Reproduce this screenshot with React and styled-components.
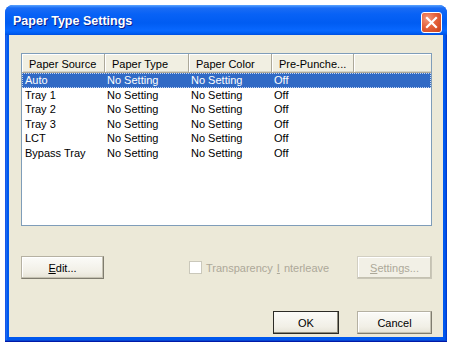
import React from 'react';
import styled, { createGlobalStyle } from 'styled-components';

const Global = createGlobalStyle`
  html, body {
    margin: 0;
    padding: 0;
    background: #fff;
  }
  body {
    font-family: "Liberation Sans", Arial, sans-serif;
    font-size: 11px;
  }
`;

const columns = [
  { title: 'Paper Source', width: 83 },
  { title: 'Paper Type', width: 84 },
  { title: 'Paper Color', width: 83 },
  { title: 'Pre-Punche...', width: 82 },
];

const rows = [
  ['Auto', 'No Setting', 'No Setting', 'Off'],
  ['Tray 1', 'No Setting', 'No Setting', 'Off'],
  ['Tray 2', 'No Setting', 'No Setting', 'Off'],
  ['Tray 3', 'No Setting', 'No Setting', 'Off'],
  ['LCT', 'No Setting', 'No Setting', 'Off'],
  ['Bypass Tray', 'No Setting', 'No Setting', 'Off'],
];

export default function App() {
  return (
    <>
      <Global />
      <Page>
        <Window>
          <TitleBar>
            <Title>Paper Type Settings</Title>
            <CloseButton>
              <svg width="13" height="13" viewBox="0 0 13 13">
                <path d="M2 2 L11 11 M11 2 L2 11" stroke="#fff" strokeWidth="2.2" strokeLinecap="square" />
              </svg>
            </CloseButton>
          </TitleBar>
          <Client>
            <ListView>
              <HeaderRow>
                {columns.map((c) => (
                  <HeaderCell key={c.title} style={{ width: c.width }}>{c.title}</HeaderCell>
                ))}
                <HeaderFiller />
              </HeaderRow>
              {rows.map((r, i) => (
                <Row key={r[0]} selected={i === 0}>
                  {r.map((cell, j) => (
                    <Cell key={j} first={j === 0} style={{ width: columns[j].width }}>{cell}</Cell>
                  ))}
                </Row>
              ))}
            </ListView>

            <ActionRow>
              <Button width={83}><u>E</u>dit...</Button>
              <CheckLabel>
                <CheckBox />
                Transparency <u>I</u>nterleave
              </CheckLabel>
              <Button width={75} disabled><u>S</u>ettings...</Button>
            </ActionRow>

            <FooterRow>
              <Button width={66} isDefault>OK</Button>
              <Button width={75}>Cancel</Button>
            </FooterRow>
          </Client>
        </Window>
      </Page>
    </>
  );
}

const Page = styled.div`
  padding: 5px 4px 1px 5px;
`;

const Window = styled.div`
  width: 442px;
  box-sizing: border-box;
  background: linear-gradient(90deg, #0831d9 0, #2a7af5 1px, #0058ee 2px, #0058ee calc(100% - 2px), #0033c8 100%);
  border-radius: 8px 8px 0 0;
  padding: 0 4px 4px 4px;
  border-bottom: 1px solid #0019a8;
  box-shadow: inset 0 -1px 0 #0846d0;
`;

const TitleBar = styled.div`
  height: 30px;
  margin: 0 -4px;
  padding: 0 5px 0 8px;
  display: flex;
  align-items: center;
  justify-content: space-between;
  border-radius: 8px 8px 0 0;
  background: linear-gradient(
    #5aa4ff 0%,
    #1a6cf4 10%,
    #0862f6 30%,
    #005cf2 60%,
    #0868ff 85%,
    #0060f6 93%,
    #0050e0 100%
  );
`;

const Title = styled.span`
  color: #fff;
  font-family: "Liberation Sans", Arial, sans-serif;
  font-weight: bold;
  font-size: 12.5px;
  text-shadow: 1px 1px 0 #0a1f8c;
  padding-top: 2px;
`;

const CloseButton = styled.div`
  width: 19px;
  height: 19px;
  margin-top: 4px;
  border: 1px solid #fff;
  border-radius: 3px;
  background: radial-gradient(circle at 30% 30%, #f39a7e 0%, #e5623b 45%, #c8411b 100%);
  display: flex;
  align-items: center;
  justify-content: center;
`;

const Client = styled.div`
  background: #ece9d8;
  padding: 18px 11px 3px 12px;
  display: flex;
  flex-direction: column;
`;

const ListView = styled.div`
  width: 411px;
  height: 173px;
  box-sizing: border-box;
  background: #fff;
  border: 1px solid #7f9db9;
  display: flex;
  flex-direction: column;
`;

const HeaderRow = styled.div`
  display: flex;
  height: 19px;
  flex: 0 0 19px;
  box-sizing: border-box;
  background: #f1efe2;
  border-bottom: 1px solid #aca899;
  box-shadow: inset 0 -1px 0 #d6d3c6;
`;

const HeaderCell = styled.div`
  box-sizing: border-box;
  padding: 4px 0 0 7px;
  color: #000;
  white-space: nowrap;
  overflow: hidden;
  border-right: 1px solid #aca899;
  box-shadow: inset 1px 0 0 #fff, inset 0 1px 0 #fff;
`;

const HeaderFiller = styled.div`
  flex: 1;
  box-shadow: inset 1px 0 0 #fff, inset 0 1px 0 #fff;
`;

const Row = styled.div`
  display: flex;
  height: 14.5px;
  line-height: 14.5px;
  box-sizing: border-box;
  color: ${(p) => (p.selected ? '#fff' : '#000')};
  background: ${(p) => (p.selected ? '#316ac5' : 'transparent')};
  outline: ${(p) => (p.selected ? '1px dotted #c9d7ee' : 'none')};
  outline-offset: -1px;
`;

const Cell = styled.div`
  box-sizing: border-box;
  padding-left: ${(p) => (p.first ? '3px' : '2px')};
  white-space: nowrap;
  overflow: hidden;
`;

const ActionRow = styled.div`
  display: flex;
  align-items: center;
  margin-top: 30px;
  width: 411px;
`;

const FooterRow = styled.div`
  display: flex;
  justify-content: flex-end;
  gap: 18px;
  margin-top: 32px;
  width: 411px;
`;

const Button = styled.button`
  width: ${(p) => p.width}px;
  height: 23px;
  padding: 0;
  font-family: "Liberation Sans", Arial, sans-serif;
  font-size: 11px;
  color: ${(p) => (p.disabled ? '#aca899' : '#000')};
  background: ${(p) => (p.disabled ? '#f2f0e6' : 'linear-gradient(#fbfbf8, #f1efe6 70%, #e6e3d6)')};
  border: 1px solid ${(p) => (p.isDefault ? '#2c2b26' : p.disabled ? '#d2cfc2' : '#b5b1a2')};
  border-right-color: ${(p) => (p.isDefault ? '#2c2b26' : p.disabled ? '#c9c6b8' : '#7f7c6f')};
  border-bottom-color: ${(p) => (p.isDefault ? '#2c2b26' : p.disabled ? '#c9c6b8' : '#7f7c6f')};
  box-shadow: ${(p) => (p.isDefault ? 'inset -1px -1px 0 #8e8b7c' : 'inset -1px -1px 0 #c5c2b2, inset 1px 1px 0 #fff')};
  u {
    text-decoration: underline;
  }
`;

const CheckLabel = styled.label`
  display: flex;
  align-items: center;
  gap: 4px;
  margin-left: 85px;
  margin-right: auto;
  color: #aca899;
  white-space: nowrap;
`;

const CheckBox = styled.span`
  width: 13px;
  height: 13px;
  box-sizing: border-box;
  border: 1px solid #cac8bb;
  background: #fff;
`;
